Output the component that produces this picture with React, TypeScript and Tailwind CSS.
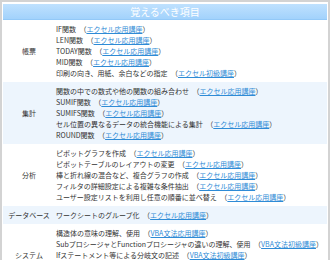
const font = { fontFamily: '"Noto Sans CJK JP", "Noto Sans", sans-serif' };

type Item = { text: string; link: string };
type Section = { label: string; shaded: boolean; items: Item[] };

const sections: Section[] = [
  {
    label: "帳票",
    shaded: false,
    items: [
      { text: "IF関数", link: "エクセル応用講座" },
      { text: "LEN関数", link: "エクセル応用講座" },
      { text: "TODAY関数", link: "エクセル応用講座" },
      { text: "MID関数", link: "エクセル応用講座" },
      { text: "印刷の向き、用紙、余白などの指定", link: "エクセル初級講座" },
    ],
  },
  {
    label: "集計",
    shaded: true,
    items: [
      { text: "関数の中での数式や他の関数の組み合わせ", link: "エクセル応用講座" },
      { text: "SUMIF関数", link: "エクセル応用講座" },
      { text: "SUMIFS関数", link: "エクセル応用講座" },
      { text: "セル位置の異なるデータの統合機能による集計", link: "エクセル応用講座" },
      { text: "ROUND関数", link: "エクセル応用講座" },
    ],
  },
  {
    label: "分析",
    shaded: false,
    items: [
      { text: "ピボットグラフを作成", link: "エクセル応用講座" },
      { text: "ピボットテーブルのレイアウトの変更", link: "エクセル応用講座" },
      { text: "棒と折れ線の混合など、複合グラフの作成", link: "エクセル応用講座" },
      { text: "フィルタの詳細設定による複雑な条件抽出", link: "エクセル応用講座" },
      { text: "ユーザー設定リストを利用し任意の順番に並べ替え", link: "エクセル応用講座" },
    ],
  },
  {
    label: "データベース",
    shaded: true,
    items: [{ text: "ワークシートのグループ化", link: "エクセル応用講座" }],
  },
  {
    label: "システム",
    shaded: false,
    items: [
      { text: "構造体の意味の理解、使用", link: "VBA文法応用講座" },
      { text: "SubプロシージャとFunctionプロシージャの違いの理解、使用", link: "VBA文法初級講座" },
      { text: "Ifステートメント等による分岐文の記述", link: "VBA文法初級講座" },
      { text: "For...Nextステートメントによる繰り返し処理", link: "VBA文法初級講座" },
      { text: "ユーザー定義関数の作成", link: "VBA文法応用講座" },
    ],
  },
];

export default function App() {
  return (
    <div
      className="w-[330px] h-[260px] overflow-hidden bg-[#d3d3d3] pt-[2px] px-[2px]"
      style={font}
    >
      <div className="h-full bg-white px-[1px] pt-[2px]">
        {/* title bar */}
        <div className="h-[16px] flex items-center justify-center bg-gradient-to-b from-[#bfe1fe] to-[#a2d2fc] border-b border-[#93c9f8] text-white text-[10px] leading-none">
          覚えるべき項目
        </div>

        {/* rows */}
        {sections.map((s) => (
          <div
            key={s.label}
            className={`flex items-center py-[3.5px] ${s.shaded ? "bg-[#edf5fd]" : "bg-white"}`}
          >
            <div className="w-[52px] shrink-0 text-center text-[7px] leading-[11px] text-[#333]">
              {s.label}
            </div>
            <div className="pl-[1px] flex flex-col">
              {s.items.map((it) => (
                <div
                  key={it.text}
                  className="whitespace-nowrap text-[7px] leading-[11px] text-[#333]"
                >
                  {it.text}　（
                  <a className="text-[#2e8bd6] underline">{it.link}</a>）
                </div>
              ))}
            </div>
          </div>
        ))}
      </div>
    </div>
  );
}
